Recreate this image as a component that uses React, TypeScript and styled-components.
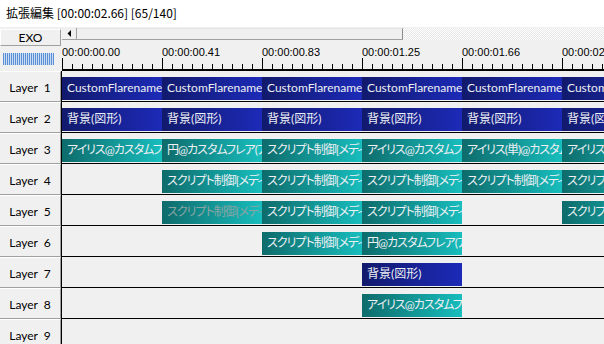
import React from "react";
import styled, { createGlobalStyle } from "styled-components";

const GlobalStyle = createGlobalStyle`
  html, body { margin: 0; padding: 0; background: #f0f0f0; overflow: hidden; }
  * { box-sizing: border-box; }
`;

const Window = styled.div`
  width: 604px;
  height: 344px;
  overflow: hidden;
  display: flex;
  flex-direction: column;
  background: #f0f0f0;
  font-family: "Liberation Sans", "Noto Sans CJK JP", sans-serif;
`;

const TitleBar = styled.div`
  height: 27px;
  flex-shrink: 0;
  background: #ffffff;
  padding-left: 6px;
  line-height: 26px;
  font-size: 12px;
  color: #000;
  font-family: "Noto Sans CJK JP", sans-serif;
  font-feature-settings: "palt";
  white-space: nowrap;
`;

const Header = styled.div`
  height: 44px;
  flex-shrink: 0;
  display: grid;
  grid-template-columns: 62px 1fr;
`;

const HeaderLeft = styled.div`
  display: flex;
  flex-direction: column;
  padding-top: 2px;
`;

const ExoButton = styled.div`
  width: 61px;
  height: 17px;
  border-top: 1px solid #ffffff;
  border-left: 1px solid #ffffff;
  border-right: 1px solid #a0a0a0;
  border-bottom: 1px solid #a0a0a0;
  font-family: "Lato", "Liberation Sans", sans-serif;
  font-size: 12px;
  line-height: 16px;
  text-align: center;
  color: #000;
`;

const Stripes = styled.div`
  margin: 7px 0 0 3px;
  width: 51px;
  height: 12px;
  background: repeating-linear-gradient(
    to right,
    #5b8fd8 0 1px,
    #c8dcf2 1px 2px
  );
`;

const HeaderRight = styled.div`
  display: flex;
  flex-direction: column;
  padding-top: 1px;
  overflow: hidden;
`;

const ScrollBar = styled.div`
  height: 12px;
  display: flex;
  flex-shrink: 0;
`;

const ArrowButton = styled.div`
  width: 15px;
  height: 12px;
  background: #f0f0f0;
  border-right: 1px solid #a0a0a0;
  border-bottom: 1px solid #a0a0a0;
  display: flex;
  align-items: center;
  justify-content: center;
`;

const Thumb = styled.div`
  width: 326px;
  height: 12px;
  background: #f0f0f0;
  border-top: 1px solid #e3e3e3;
  border-right: 1px solid #8c8c8c;
  border-bottom: 1px solid #a0a0a0;
`;

const Track = styled.div`
  flex: 1;
  height: 12px;
  background: repeating-conic-gradient(#ffffff 0 25%, #e6e6e6 0 50%) 0 0 / 2px 2px;
`;

const Ruler = styled.div`
  flex: 1;
  display: flex;
  border-bottom: 1px solid #000;
`;

const RulerCell = styled.div`
  width: 100px;
  flex-shrink: 0;
  display: flex;
  flex-direction: column;
`;

const TimeLabel = styled.div`
  height: 18px;
  font-size: 11px;
  line-height: 18px;
  color: #000;
  white-space: nowrap;
  padding-top: 3px;
`;

const Ticks = () => (
  <svg width="100" height="12" viewBox="0 0 100 12">
    <line x1="0.5" y1="0" x2="0.5" y2="12" stroke="#000" strokeWidth="1" />
    <line x1="0" y1="11.5" x2="100" y2="11.5" stroke="#000" strokeWidth="1" />
    {Array.from({ length: 9 }, (_, i) => (
      <line
        key={i}
        x1={10 * (i + 1) + 0.5}
        y1="6"
        x2={10 * (i + 1) + 0.5}
        y2="12"
        stroke="#000"
        strokeWidth="1"
      />
    ))}
  </svg>
);

const Row = styled.div`
  height: 31px;
  flex-shrink: 0;
  display: grid;
  grid-template-columns: 61px 1fr;
`;

const LayerButton = styled.div`
  height: 31px;
  border-top: 1px solid #ffffff;
  border-right: 1px solid #a0a0a0;
  border-bottom: 1px solid #a0a0a0;
  padding-top: 1px;
  font-family: "Lato", "Liberation Sans", sans-serif;
  font-size: 12px;
  line-height: 29px;
  text-align: center;
  color: #000;
  white-space: pre;
`;

const Lane = styled.div`
  height: 31px;
  border-left: 1px solid #000;
  border-bottom: 1px solid #000;
  padding-top: 6px;
  display: grid;
  grid-template-columns: repeat(6, 100px);
  grid-template-rows: 23px;
  overflow: hidden;
`;

type Kind = "blue" | "teal";

const Clip = styled.div<{ $kind: Kind; $slot: number; $disabled?: boolean; $tight?: boolean }>`
  grid-column: ${(p) => p.$slot + 1};
  grid-row: 1;
  height: 23px;
  padding-left: 5px;
  overflow: hidden;
  white-space: nowrap;
  font-family: "Lato", "Noto Sans CJK JP", sans-serif;
  font-feature-settings: "palt";
  font-size: 12px;
  letter-spacing: ${(p) => (p.$tight ? "-1px" : "0")};
  line-height: 22px;
  color: ${(p) => (p.$disabled ? "#8aa4a4" : "#eef0f4")};
  background: ${(p) =>
    p.$kind === "blue"
      ? "linear-gradient(to right, #121a6c, #1c2ab8)"
      : "linear-gradient(to right, #0e6b6b, #18bdbd)"};
`;

type ClipData = { slot: number; kind: Kind; text: string; disabled?: boolean };

const CF = "CustomFlarename";
const BG = "背景(図形)";
const IRIS = "アイリス@カスタムフレア(アイリス)";
const CIRCLE = "円@カスタムフレア(アイリス)";
const SCRIPT = "スクリプト制御[メディアオブジェクト]";
const IRIS_S = "アイリス(単)@カスタムフレア";

const isKana = (t: string) => /[\u30a0-\u30ff]/.test(t);

const layers: ClipData[][] = [
  [0, 1, 2, 3, 4, 5].map((s) => ({ slot: s, kind: "blue" as Kind, text: CF })),
  [0, 1, 2, 3, 4, 5].map((s) => ({ slot: s, kind: "blue" as Kind, text: BG })),
  [
    { slot: 0, kind: "teal", text: IRIS },
    { slot: 1, kind: "teal", text: CIRCLE },
    { slot: 2, kind: "teal", text: SCRIPT },
    { slot: 3, kind: "teal", text: IRIS },
    { slot: 4, kind: "teal", text: IRIS_S },
    { slot: 5, kind: "teal", text: IRIS },
  ],
  [1, 2, 3, 4, 5].map((s) => ({ slot: s, kind: "teal" as Kind, text: SCRIPT })),
  [
    { slot: 1, kind: "teal", text: SCRIPT, disabled: true },
    { slot: 2, kind: "teal", text: SCRIPT },
    { slot: 3, kind: "teal", text: SCRIPT },
    { slot: 5, kind: "teal", text: SCRIPT },
  ],
  [
    { slot: 2, kind: "teal", text: SCRIPT },
    { slot: 3, kind: "teal", text: CIRCLE },
  ],
  [{ slot: 3, kind: "blue", text: BG }],
  [{ slot: 3, kind: "teal", text: IRIS }],
  [],
];

const times = ["00:00:00.00", "00:00:00.41", "00:00:00.83", "00:00:01.25", "00:00:01.66", "00:00:02.08"];

const ArrowIcon = () => (
  <svg width="4" height="7" viewBox="0 0 4 7">
    <polygon points="4,0 4,7 0.5,3.5" fill="#000" />
  </svg>
);

export default function App() {
  return (
    <>
      <GlobalStyle />
      <Window>
        <TitleBar>拡張編集 [00:00:02.66] [65/140]</TitleBar>
        <Header>
          <HeaderLeft>
            <ExoButton>EXO</ExoButton>
            <Stripes />
          </HeaderLeft>
          <HeaderRight>
            <ScrollBar>
              <ArrowButton>
                <ArrowIcon />
              </ArrowButton>
              <Thumb />
              <Track />
            </ScrollBar>
            <Ruler>
              {times.map((t) => (
                <RulerCell key={t}>
                  <TimeLabel>{t}</TimeLabel>
                  <Ticks />
                </RulerCell>
              ))}
            </Ruler>
          </HeaderRight>
        </Header>
        {layers.map((clips, i) => (
          <Row key={i}>
            <LayerButton>{`Layer  ${i + 1}`}</LayerButton>
            <Lane>
              {clips.map((c) => (
                <Clip
                  key={c.slot}
                  $kind={c.kind}
                  $slot={c.slot}
                  $disabled={c.disabled}
                  $tight={isKana(c.text)}
                >
                  {c.text}
                </Clip>
              ))}
            </Lane>
          </Row>
        ))}
      </Window>
    </>
  );
}
